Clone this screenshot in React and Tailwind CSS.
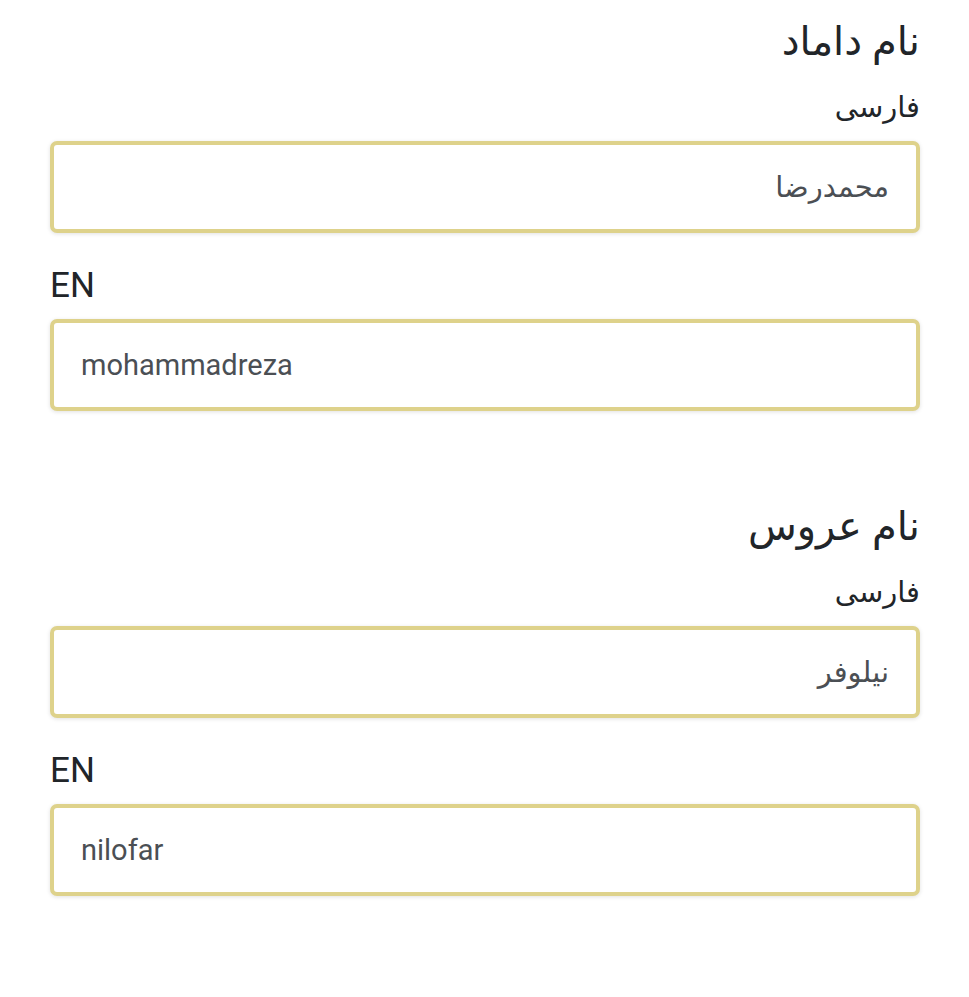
import React, { useState } from 'react';

const inputClass =
  'block w-full h-[92px] rounded-[7px] border-4 border-[#ded28b] bg-white px-[27px] text-[29px] text-[#4b4f54] shadow-[0_1px_4px_rgba(0,0,0,0.12)] outline-none';

const NameSection = ({ title, fa, en, setFa, setEn, className }) => (
  <div className={className}>
    <h2 dir="rtl" className="h-[48px] leading-[48px] text-[40px] text-[#212529]">{title}</h2>
    <label dir="rtl" className="block mt-[21px] h-[40px] leading-[40px] text-[29px] text-[#212529]">فارسی</label>
    <input
      dir="rtl"
      className={`mt-[14px] ${inputClass}`}
      value={fa}
      onChange={(e) => setFa(e.target.value)}
    />
    <label dir="ltr" className="block mt-[33px] h-[40px] leading-[40px] text-[35px] text-[#212529]">EN</label>
    <input
      dir="ltr"
      className={`mt-[13px] ${inputClass}`}
      value={en}
      onChange={(e) => setEn(e.target.value)}
    />
  </div>
);

const App = () => {
  const [groomFa, setGroomFa] = useState('محمدرضا');
  const [groomEn, setGroomEn] = useState('mohammadreza');
  const [brideFa, setBrideFa] = useState('نیلوفر');
  const [brideEn, setBrideEn] = useState('nilofar');

  return (
    <div
      className="min-h-screen bg-white pl-[50px] pr-[49px] pt-[18px] pb-[100px]"
      style={{ fontFamily: 'Roboto, "DejaVu Sans", "Noto Sans", sans-serif' }}
    >
      {/* groom */}
      <NameSection
        title="نام داماد"
        fa={groomFa}
        en={groomEn}
        setFa={setGroomFa}
        setEn={setGroomEn}
      />

      {/* bride */}
      <NameSection
        className="mt-[92px]"
        title="نام عروس"
        fa={brideFa}
        en={brideEn}
        setFa={setBrideFa}
        setEn={setBrideEn}
      />
    </div>
  );
};

export default App;
